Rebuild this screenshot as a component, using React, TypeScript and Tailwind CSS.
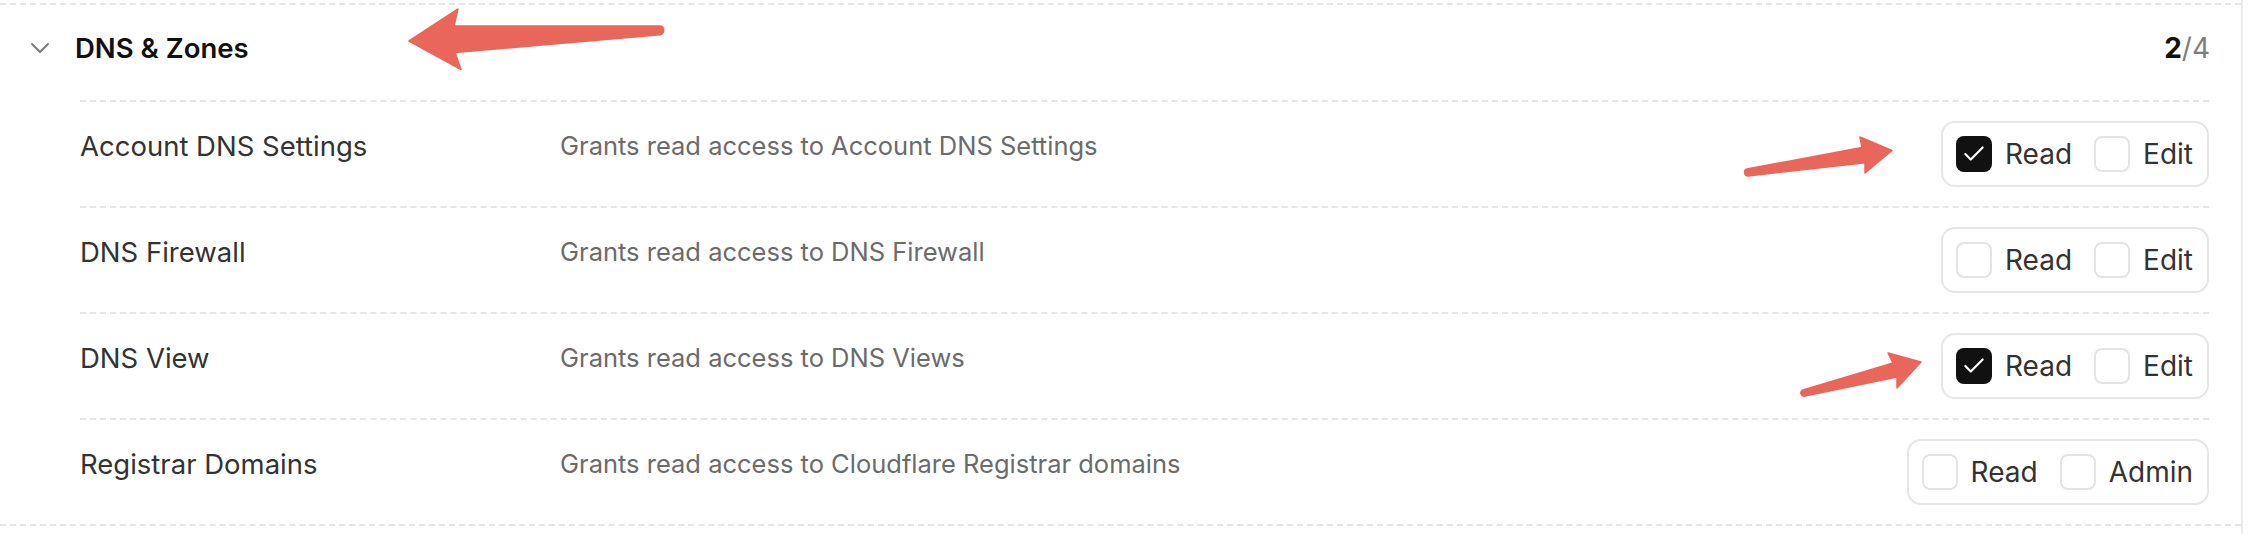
import { Check, ChevronDown } from "lucide-react";

type Option = { label: string; checked: boolean };
type Perm = { name: string; desc: string; options: Option[] };

const perms: Perm[] = [
  {
    name: "Account DNS Settings",
    desc: "Grants read access to Account DNS Settings",
    options: [
      { label: "Read", checked: true },
      { label: "Edit", checked: false },
    ],
  },
  {
    name: "DNS Firewall",
    desc: "Grants read access to DNS Firewall",
    options: [
      { label: "Read", checked: false },
      { label: "Edit", checked: false },
    ],
  },
  {
    name: "DNS View",
    desc: "Grants read access to DNS Views",
    options: [
      { label: "Read", checked: true },
      { label: "Edit", checked: false },
    ],
  },
  {
    name: "Registrar Domains",
    desc: "Grants read access to Cloudflare Registrar domains",
    options: [
      { label: "Read", checked: false },
      { label: "Admin", checked: false },
    ],
  },
];

function Box({ checked }: { checked: boolean }) {
  if (checked) {
    return (
      <span className="flex h-[36px] w-[36px] items-center justify-center rounded-[8px] bg-[#111111]">
        <Check size={26} strokeWidth={2} className="text-white" />
      </span>
    );
  }
  return <span className="block h-[36px] w-[36px] rounded-[8px] border-2 border-[#e4e4e4] bg-white" />;
}

function PermRow({ perm }: { perm: Perm }) {
  return (
    <div className="flex items-start border-t-2 border-dashed border-[#e6e6e6] py-[19px]">
      <div className="w-[480px] pt-[5px] text-[27.5px] leading-[40px] text-[#333333]">{perm.name}</div>
      <div className="flex-1 pt-[5px] text-[25.5px] leading-[40px] text-[#6b6b6b]">{perm.desc}</div>
      <div className="flex h-[66px] items-center gap-[22px] rounded-[14px] border-2 border-[#e6e6e6] pl-[13px] pr-[14px]">
        {perm.options.map((o) => (
          <label key={o.label} className="flex items-center gap-[13px]">
            <Box checked={o.checked} />
            <span className="text-[28px] leading-[40px] text-[#333333]">{o.label}</span>
          </label>
        ))}
      </div>
    </div>
  );
}

export default function App() {
  return (
    <div className="relative h-[534px] w-[2250px] overflow-hidden bg-white font-['Inter','Liberation_Sans',sans-serif]">
      <div className="h-[534px] w-[2243px] border-r-2 border-[#ececec] pt-[3px]">
        <div className="border-t-2 border-dashed border-[#e6e6e6]">
          {/* Section header */}
          <div className="flex h-[95px] items-center pb-[9px] pl-[24px] pr-[31px]">
            <ChevronDown size={32} strokeWidth={1.5} className="text-[#7a7a7a]" />
            <span className="ml-[19px] text-[27.5px] font-semibold leading-[40px] text-[#111111]">DNS &amp; Zones</span>
            <span className="ml-auto text-[28px] leading-[40px]">
              <span className="font-bold text-[#111111]">2</span>
              <span className="text-[#7d7d7d]">/4</span>
            </span>
          </div>

          {/* Permission rows */}
          <div className="ml-[80px] mr-[32px]">
            {perms.map((p) => (
              <PermRow key={p.name} perm={p} />
            ))}
          </div>
          <div className="border-t-2 border-dashed border-[#e6e6e6]" />
        </div>
      </div>

      {/* Annotation arrows */}
      <svg className="pointer-events-none absolute left-0 top-0" width="2250" height="534" viewBox="0 0 2250 534">
        <path
          d="M409 41 L458 9 L454 26 L660 26 A4.4 4.4 0 0 1 660 34.7 L455 52.5 L461 69.6 Z"
          fill="#e9665a"
          stroke="#e9665a"
          strokeWidth="1.5"
          strokeLinejoin="round"
        />
        <path
          d="M1892 150.5 L1860 137 L1862 147.5 L1747 169 A3.6 3.6 0 0 0 1748 176 L1865 162.7 L1865 173 Z"
          fill="#e9665a"
          stroke="#e9665a"
          strokeWidth="1.5"
          strokeLinejoin="round"
        />
        <path
          d="M1921 362 L1888 353 L1893 363 L1803 390 A3 3 0 0 0 1805 396 L1897 377 L1897 388 Z"
          fill="#e9665a"
          stroke="#e9665a"
          strokeWidth="1.5"
          strokeLinejoin="round"
        />
      </svg>
    </div>
  );
}
